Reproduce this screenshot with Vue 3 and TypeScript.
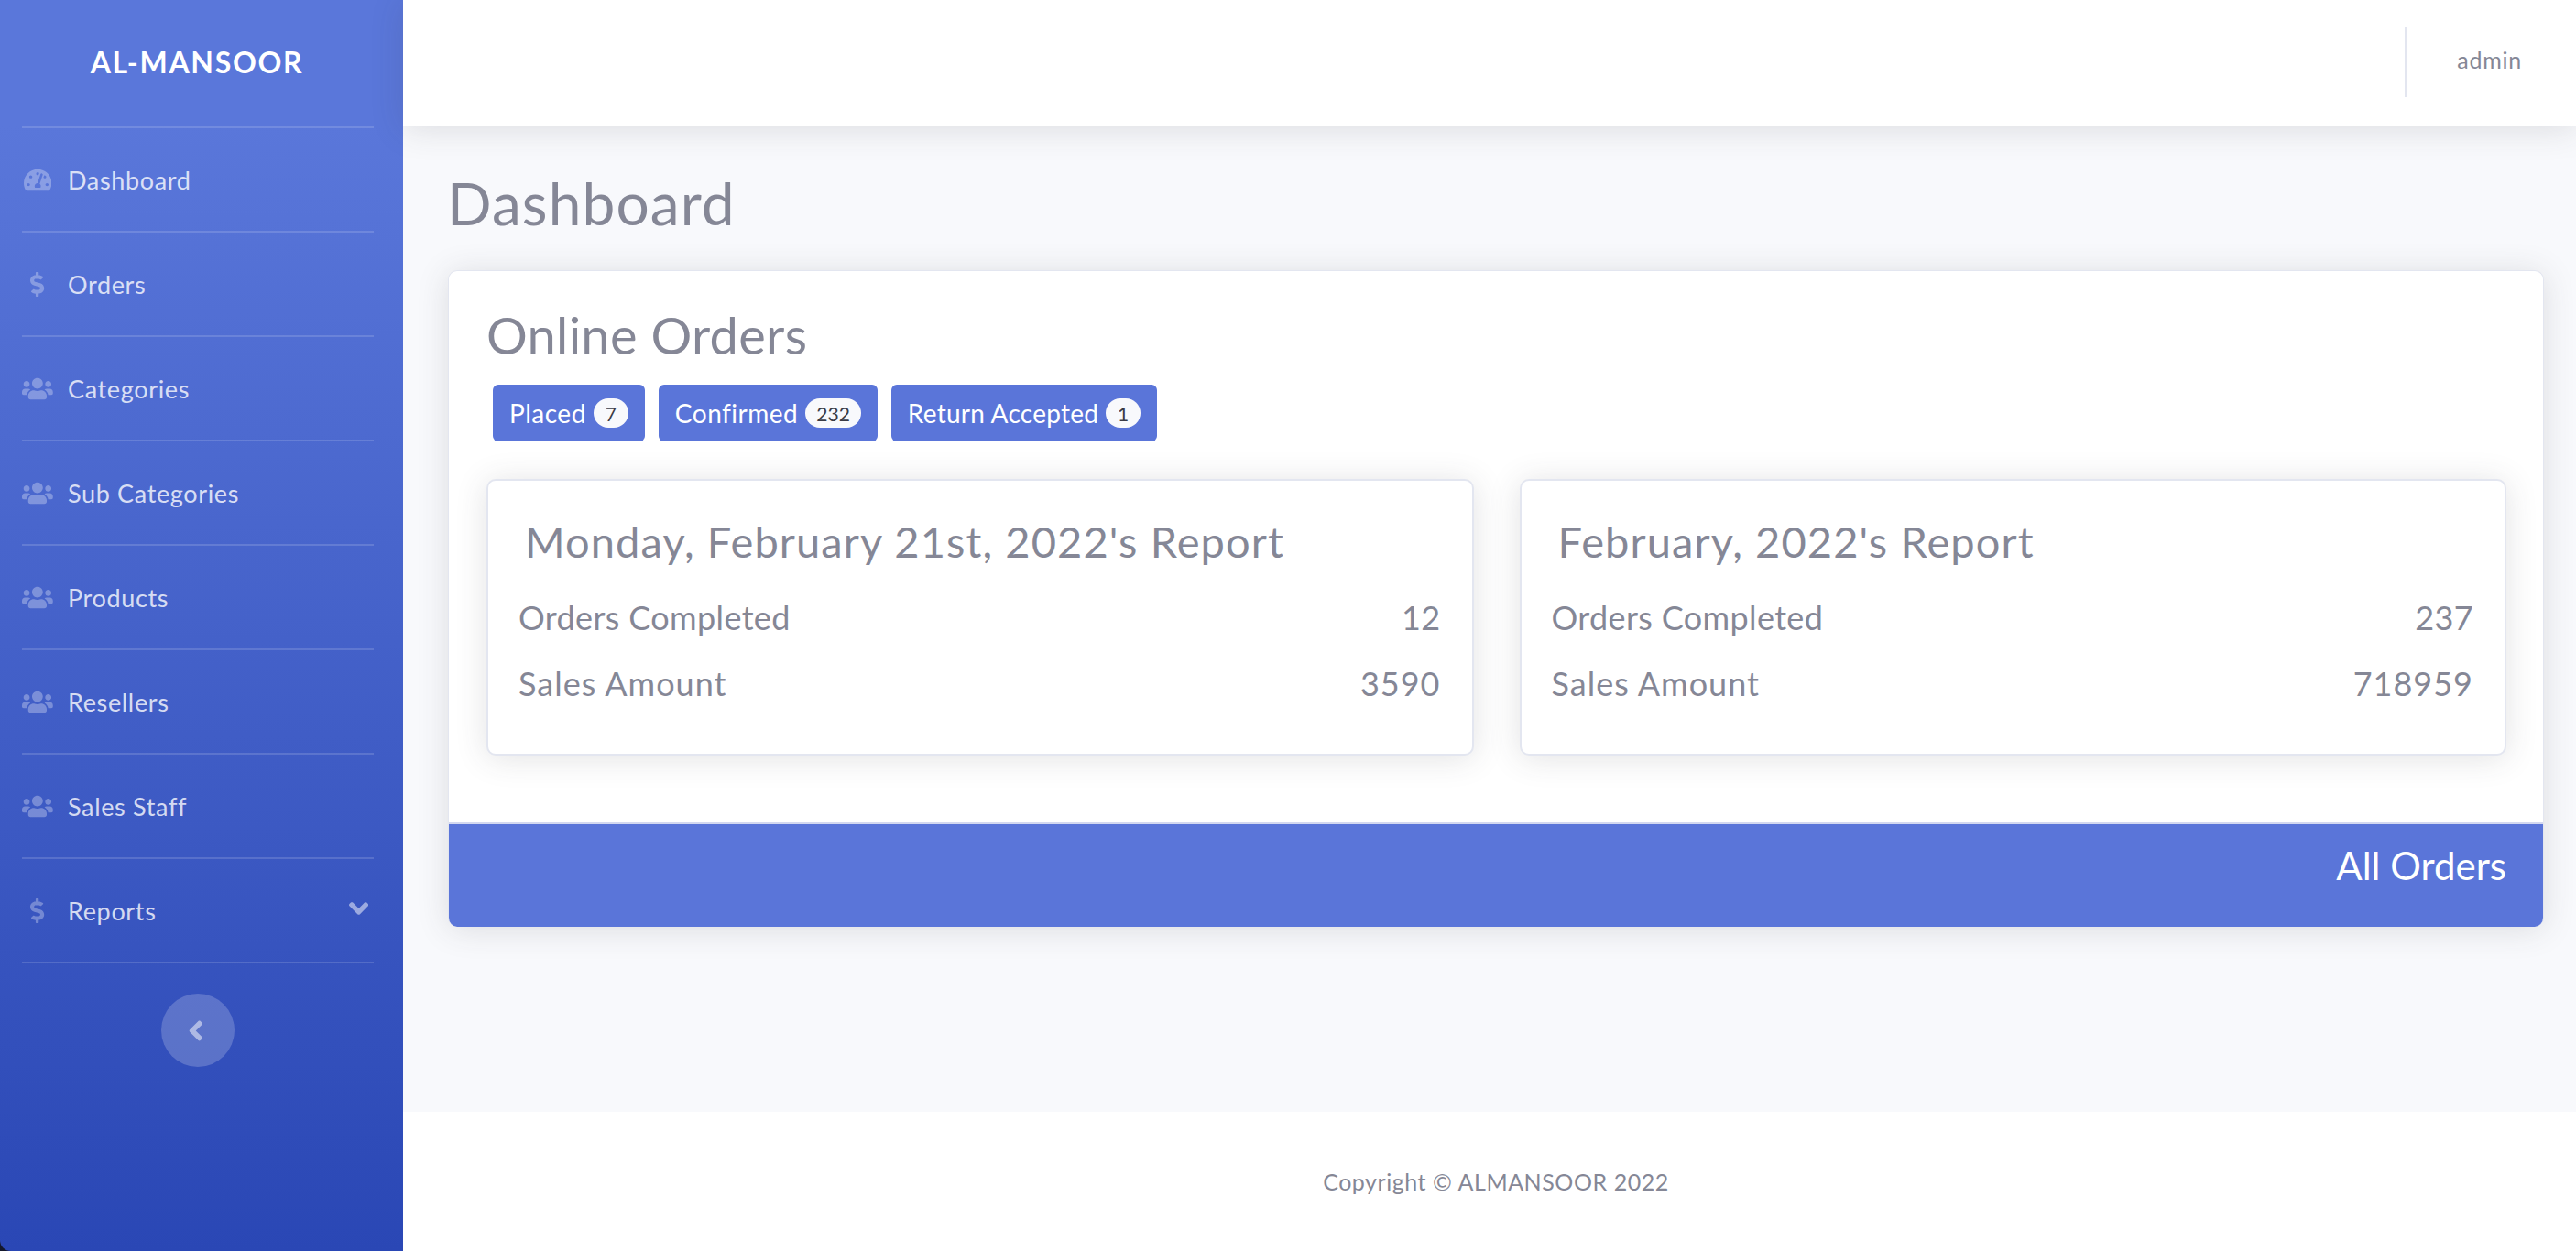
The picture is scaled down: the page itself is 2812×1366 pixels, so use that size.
<script setup lang="ts">
interface NavItem { label: string; icon: string; caret?: boolean }
const ICONS: Record<string, { vb: string; d: string }> = {
  gauge: { vb: '0 0 576 512', d: 'M288 32C128.94 32 0 160.94 0 320c0 52.8 14.25 102.26 39.06 144.8 5.61 9.62 16.3 15.2 27.44 15.2h443c11.14 0 21.83-5.58 27.44-15.2C561.75 422.26 576 372.8 576 320c0-159.06-128.94-288-288-288zm0 64c14.71 0 26.58 10.13 30.32 23.65-1.11 2.26-2.64 4.23-3.45 6.67l-9.22 27.67c-5.13 3.49-10.97 6.01-17.64 6.01-17.67 0-32-14.33-32-32S270.33 96 288 96zM96 384c-17.67 0-32-14.33-32-32s14.33-32 32-32 32 14.33 32 32-14.33 32-32 32zm48-160c-17.67 0-32-14.33-32-32s14.33-32 32-32 32 14.33 32 32-14.33 32-32 32zm246.77-72.41l-61.33 184C343.13 347.33 352 364.54 352 384c0 11.72-3.38 22.55-8.88 32H232.88c-5.5-9.45-8.88-20.28-8.88-32 0-33.94 26.5-61.43 59.9-63.59l61.34-184.01c4.17-12.56 17.73-19.45 30.36-15.17 12.57 4.19 19.35 17.79 15.17 30.36zm14.66 57.2l15.52-46.55c3.47-1.29 7.13-2.23 11.05-2.23 17.67 0 32 14.33 32 32s-14.33 32-32 32c-11.38-.01-20.89-6.28-26.57-15.22zM480 384c-17.67 0-32-14.33-32-32s14.33-32 32-32 32 14.33 32 32-14.33 32-32 32z' },
  dollar: { vb: '0 0 288 512', d: 'M209.2 233.4l-108-31.6C88.7 198.2 80 186.5 80 173.5c0-16.3 13.2-29.5 29.5-29.5h66.3c12.2 0 24.2 3.7 34.2 10.5 6.1 4.1 14.3 3.1 19.5-2l34.8-34c7.1-6.9 6.1-18.4-1.8-24.5C238 74.8 207.4 64.1 176 64V16c0-8.8-7.2-16-16-16h-32c-8.8 0-16 7.2-16 16v48h-2.5C45.8 64-5.4 118.7.5 183.6c4.2 46.1 39.4 83.6 83.8 96.6l102.5 30c12.5 3.7 21.2 15.3 21.2 28.3 0 16.3-13.2 29.5-29.5 29.5h-66.3C100 368 88 364.3 78 357.5c-6.1-4.1-14.3-3.1-19.5 2l-34.8 34c-7.1 6.9-6.1 18.4 1.8 24.5 24.5 19.2 55.1 29.9 86.5 30v48c0 8.8 7.2 16 16 16h32c8.8 0 16-7.2 16-16v-48.2c46.6-.9 90.3-28.6 105.7-72.7 21.5-61.6-14.6-124.8-72.5-141.7z' },
  users: { vb: '0 0 640 512', d: 'M96 224c35.3 0 64-28.7 64-64s-28.7-64-64-64-64 28.7-64 64 28.7 64 64 64zm448 0c35.3 0 64-28.7 64-64s-28.7-64-64-64-64 28.7-64 64 28.7 64 64 64zm32 32h-64c-17.6 0-33.5 7.1-45.1 18.6 40.3 22.1 68.9 62 75.1 109.4h66c17.7 0 32-14.3 32-32v-32c0-35.3-28.7-64-64-64zm-256 0c61.9 0 112-50.1 112-112S381.9 32 320 32 208 82.1 208 144s50.1 112 112 112zm76.8 32h-8.3c-20.8 10-43.9 16-68.5 16s-47.6-6-68.5-16h-8.3C179.6 288 128 339.6 128 403.2V432c0 26.5 21.5 48 48 48h288c26.5 0 48-21.5 48-48v-28.8c0-63.6-51.6-115.2-115.2-115.2zm-223.7-13.4C161.5 263.1 145.6 256 128 256H64c-35.3 0-64 28.7-64 64v32c0 17.7 14.3 32 32 32h65.9c6.3-47.4 34.9-87.3 75.2-109.4z' },
}
const ANGLE_DOWN = 'M143 352.3L7 216.3c-9.4-9.4-9.4-24.6 0-33.9l22.6-22.6c9.4-9.4 24.6-9.4 33.9 0l96.4 96.4 96.4-96.4c9.4-9.4 24.6-9.4 33.9 0l22.6 22.6c9.4 9.4 9.4 24.6 0 33.9l-136 136c-9.2 9.4-24.4 9.4-33.8 0z'
const ANGLE_LEFT = 'M31.7 239l136-136c9.4-9.4 24.6-9.4 33.9 0l22.6 22.6c9.4 9.4 9.4 24.6 0 33.9L127.9 256l96.4 96.4c9.4 9.4 9.4 24.6 0 33.9L201.7 409c-9.4 9.4-24.6 9.4-33.9 0l-136-136c-9.5-9.4-9.5-24.6-.1-34z'
const nav: NavItem[] = [
  { label: 'Dashboard', icon: 'gauge' },
  { label: 'Orders', icon: 'dollar' },
  { label: 'Categories', icon: 'users' },
  { label: 'Sub Categories', icon: 'users' },
  { label: 'Products', icon: 'users' },
  { label: 'Resellers', icon: 'users' },
  { label: 'Sales Staff', icon: 'users' },
  { label: 'Reports', icon: 'dollar', caret: true },
]
const statuses = [
  { label: 'Placed', count: 7 },
  { label: 'Confirmed', count: 232 },
  { label: 'Return Accepted', count: 1 },
]
const reports = [
  { title: "Monday, February 21st, 2022's Report", orders: 12, sales: 3590 },
  { title: "February, 2022's Report", orders: 237, sales: 718959 },
]
</script>

<template>
  <div class="layout">
    <aside class="sidebar">
      <div class="brand">AL-MANSOOR</div>
      <ul class="nav">
        <li v-for="item in nav" :key="item.label" class="nav-item">
          <span class="nav-icon">
            <svg :viewBox="ICONS[item.icon].vb" class="icon-svg"><path :d="ICONS[item.icon].d" /></svg>
          </span>
          <span class="nav-label">{{ item.label }}</span>
          <svg v-if="item.caret" viewBox="0 0 320 512" class="caret"><path :d="ANGLE_DOWN" /></svg>
        </li>
      </ul>
      <button class="toggle" type="button" aria-label="Collapse sidebar">
        <svg viewBox="0 0 256 512" class="toggle-icon"><path :d="ANGLE_LEFT" /></svg>
      </button>
    </aside>
    <div class="main">
      <header class="topbar">
        <div class="divider"></div>
        <span class="user">admin</span>
      </header>
      <main class="content">
        <h1 class="page-title">Dashboard</h1>
        <section class="card">
          <div class="card-body">
            <h2 class="card-title">Online Orders</h2>
            <div class="statuses">
              <a v-for="s in statuses" :key="s.label" class="status-btn">
                {{ s.label }}<span class="badge">{{ s.count }}</span>
              </a>
            </div>
            <div class="reports">
              <article v-for="r in reports" :key="r.title" class="report">
                <h3 class="report-title">{{ r.title }}</h3>
                <div class="row"><span>Orders Completed</span><span>{{ r.orders }}</span></div>
                <div class="row"><span>Sales Amount</span><span>{{ r.sales }}</span></div>
              </article>
            </div>
          </div>
          <div class="card-footer">All Orders</div>
        </section>
      </main>
      <footer class="footer">Copyright © ALMANSOOR 2022</footer>
    </div>
  </div>
</template>

<style>
html, body { margin: 0; padding: 0; background: #fff; overflow: hidden; }
</style>

<style scoped>
.layout {
  display: flex;
  width: 2812px;
  height: 1366px;
  font-family: "Lato", "Open Sans", sans-serif;
  color: #858796;
  background: #14182c;
}
.sidebar {
  width: 440px;
  flex: none;
  display: flex;
  flex-direction: column;
  align-items: center;
  background: linear-gradient(180deg, #5a77da 10%, #2a47b5 100%);
  border-bottom-left-radius: 12px;
}
.brand {
  height: 138px;
  padding-bottom: 4px;
  display: flex;
  align-items: center;
  justify-content: center;
  width: 100%;
  padding-right: 10px;
  box-sizing: border-box;
  color: #fff;
  font-size: 32px;
  font-weight: 700;
  letter-spacing: 1.7px;
}
.nav {
  list-style: none;
  margin: 0;
  padding: 0;
  width: 384px;
  align-self: flex-start;
  margin-left: 24px;
  border-top: 2px solid rgba(255, 255, 255, 0.15);
}
.nav-item {
  height: 112px;
  border-bottom: 2px solid rgba(255, 255, 255, 0.15);
  display: flex;
  align-items: center;
  color: rgba(255, 255, 255, 0.8);
  font-size: 27px;
  letter-spacing: 0.65px;
}
.nav-icon {
  width: 34px;
  height: 27px;
  margin-right: 16px;
  display: flex;
  justify-content: center;
  flex: none;
}
.icon-svg {
  height: 27px;
  fill: rgba(255, 255, 255, 0.3);
}
.nav-label { flex: 1; }
.caret {
  height: 34px;
  margin-right: 6px;
  margin-top: -4px;
  fill: rgba(255, 255, 255, 0.5);
}
.toggle {
  margin-top: 33px;
  margin-right: 8px;
  width: 80px;
  height: 80px;
  border: 0;
  border-radius: 50%;
  background: rgba(255, 255, 255, 0.2);
  display: flex;
  align-items: center;
  justify-content: center;
  padding: 0 4px 0 0;
}
.toggle-icon {
  height: 35px;
  fill: rgba(255, 255, 255, 0.5);
}
.main {
  flex: 1;
  min-width: 0;
  display: flex;
  flex-direction: column;
  background: #f8f9fc;
}
.topbar {
  height: 138px;
  flex: none;
  background: #fff;
  box-shadow: 0 3px 34px rgba(58, 59, 69, 0.15);
  display: flex;
  align-items: center;
  justify-content: flex-end;
  padding-right: 59px;
  position: relative;
  z-index: 1;
}
.divider {
  width: 2px;
  height: 76px;
  background: #e3e6f0;
  margin-right: 55px;
  margin-top: -2px;
}
.user {
  font-size: 25px;
  letter-spacing: 0.75px;
  margin-top: -8px;
}
.content {
  flex: 1;
  padding: 0 35px 0 49px;
  min-height: 0;
}
.page-title {
  margin: 0;
  height: 157px;
  line-height: 168px;
  font-size: 64px;
  letter-spacing: 1.1px;
  font-weight: 400;
  margin-left: -1px;
}
.card {
  background: #fff;
  border: 1px solid #e3e6f0;
  border-bottom: 0;
  border-radius: 10px;
  box-shadow: 0 3px 34px rgba(58, 59, 69, 0.15);
  overflow: hidden;
  box-sizing: border-box;
  height: 717px;
  display: flex;
  flex-direction: column;
}
.card-body {
  flex: 1;
  padding: 0 40px 0 41px;
}
.card-title {
  margin: 0;
  height: 124px;
  line-height: 140px;
  font-size: 56px;
  letter-spacing: 0.3px;
  font-weight: 400;
}
.statuses {
  display: flex;
  gap: 15px;
  padding-left: 7px;
}
.status-btn {
  display: flex;
  align-items: center;
  height: 62px;
  padding: 0 18px;
  background: #5a75d9;
  color: #fff;
  border-radius: 6px;
  font-size: 28px;
  letter-spacing: 0.5px;
}
.status-btn:nth-child(3) {
  letter-spacing: 0.25px;
}
.badge {
  margin-left: 8px;
  height: 32px;
  min-width: 38px;
  padding: 0 12px;
  box-sizing: border-box;
  border-radius: 16px;
  background: #f8f9fc;
  color: #3a3b45;
  font-size: 21px;
  letter-spacing: 0;
  display: flex;
  align-items: center;
  justify-content: center;
}
.reports {
  display: flex;
  gap: 50px;
  margin-top: 41px;
}
.report {
  flex: 1;
  height: 302px;
  box-sizing: border-box;
  border: 2px solid #e3e6f0;
  border-radius: 10px;
  box-shadow: 0 3px 34px rgba(58, 59, 69, 0.15);
  background: #fff;
  padding: 0 34px 0 33px;
}
.report-title {
  margin: 0 0 0 7px;
  height: 113px;
  line-height: 132px;
  font-size: 47px;
  letter-spacing: 1.1px;
  font-weight: 400;
}
.row {
  display: flex;
  justify-content: space-between;
  align-items: center;
  height: 72px;
  font-size: 36px;
  letter-spacing: 0.35px;
}
.row + .row {
  letter-spacing: 1px;
}
.card-footer {
  flex: none;
  height: 114px;
  box-sizing: border-box;
  border-top: 2px solid #d3d8f0;
  background: #5a75d9;
  color: #fff;
  font-size: 42px;
  display: flex;
  align-items: center;
  justify-content: flex-end;
  padding-right: 40px;
  padding-bottom: 22px;
}
.footer {
  height: 152px;
  flex: none;
  background: #fff;
  display: flex;
  align-items: center;
  justify-content: center;
  font-size: 25px;
  letter-spacing: 0.55px;
  padding-left: 14px;
}
</style>
